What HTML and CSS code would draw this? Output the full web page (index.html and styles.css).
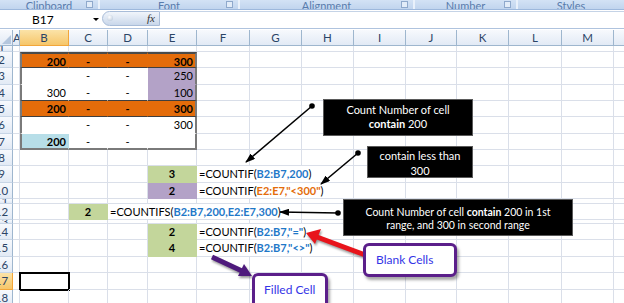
FILE: index.html
```html
<!DOCTYPE html>
<html lang="en">
<head>
  <meta charset="UTF-8">
  <title>COUNTIF examples</title>
  <link rel="stylesheet" href="styles.css">
</head>
<body>

  <!-- Ribbon group captions (cut off at the top) -->
  <div class="ribbon">
    <div class="grp g-clip"><span>Clipboard</span><i class="launch"></i></div>
    <div class="grp g-font"><span>Font</span><i class="launch"></i></div>
    <div class="grp g-align"><span>Alignment</span><i class="launch"></i></div>
    <div class="grp g-num"><span>Number</span><i class="launch"></i></div>
    <div class="grp g-styles"><span>Styles</span></div>
  </div>

  <!-- Formula bar -->
  <div class="fbar">
    <div class="namebox">B17<i class="dd"></i></div>
    <div class="fxbtn"><i class="knob"></i><em>fx</em></div>
    <div class="finput"></div>
  </div>

  <!-- Sheet -->
  <div class="sheet">
    <div class="corner"><i class="tri"></i></div><div class="ch ca">A</div><div class="ch sel">B</div><div class="ch">C</div><div class="ch">D</div><div class="ch">E</div><div class="ch">F</div><div class="ch">G</div><div class="ch">H</div><div class="ch">I</div><div class="ch">J</div><div class="ch">K</div><div class="ch">L</div><div class="ch">M</div><div class="ch"></div>

    <div class="rh thin"><span>1</span></div><div class="c"></div><div class="c"></div><div class="c"></div><div class="c"></div><div class="c"></div><div class="c"></div><div class="c"></div><div class="c"></div><div class="c"></div><div class="c"></div><div class="c"></div><div class="c"></div><div class="c"></div><div class="c"></div>

    <div class="rh"><span>2</span></div><div class="c"></div><div class="c org num ot ol">200</div><div class="c org ctr ot">-</div><div class="c org ctr ot">-</div><div class="c org num ot or">300</div><div class="c"></div><div class="c"></div><div class="c"></div><div class="c"></div><div class="c"></div><div class="c"></div><div class="c"></div><div class="c"></div><div class="c"></div>

    <div class="rh"><span>3</span></div><div class="c"></div><div class="c w ol"></div><div class="c w ctr">-</div><div class="c w ctr">-</div><div class="c pur num or">250</div><div class="c"></div><div class="c"></div><div class="c"></div><div class="c"></div><div class="c"></div><div class="c"></div><div class="c"></div><div class="c"></div><div class="c"></div>

    <div class="rh"><span>4</span></div><div class="c"></div><div class="c w num ol db">300</div><div class="c w ctr db">-</div><div class="c w ctr db">-</div><div class="c pur num or db">100</div><div class="c"></div><div class="c"></div><div class="c"></div><div class="c"></div><div class="c"></div><div class="c"></div><div class="c"></div><div class="c"></div><div class="c"></div>

    <div class="rh"><span>5</span></div><div class="c"></div><div class="c org num ol">200</div><div class="c org ctr">-</div><div class="c org ctr">-</div><div class="c org num or">300</div><div class="c"></div><div class="c"></div><div class="c"></div><div class="c"></div><div class="c"></div><div class="c"></div><div class="c"></div><div class="c"></div><div class="c"></div>

    <div class="rh"><span>6</span></div><div class="c"></div><div class="c w ol"></div><div class="c w ctr">-</div><div class="c w ctr">-</div><div class="c w num or">300</div><div class="c"></div><div class="c"></div><div class="c"></div><div class="c"></div><div class="c"></div><div class="c"></div><div class="c"></div><div class="c"></div><div class="c"></div>

    <div class="rh"><span>7</span></div><div class="c"></div><div class="c blu num ol ob">200</div><div class="c w ctr ob">-</div><div class="c w ctr ob">-</div><div class="c w or ob"></div><div class="c"></div><div class="c"></div><div class="c"></div><div class="c"></div><div class="c"></div><div class="c"></div><div class="c"></div><div class="c"></div><div class="c"></div>

    <div class="rh"><span>8</span></div><div class="c"></div><div class="c"></div><div class="c"></div><div class="c"></div><div class="c"></div><div class="c"></div><div class="c"></div><div class="c"></div><div class="c"></div><div class="c"></div><div class="c"></div><div class="c"></div><div class="c"></div><div class="c"></div>

    <div class="rh"><span>9</span></div><div class="c"></div><div class="c"></div><div class="c"></div><div class="c"></div><div class="c grn ctr">3</div><div class="c fx span3">=COUNTIF(<b class="ref">B2:B7,200</b>)</div><div class="c"></div><div class="c"></div><div class="c"></div><div class="c"></div><div class="c"></div><div class="c"></div>

    <div class="rh"><span>10</span></div><div class="c"></div><div class="c"></div><div class="c"></div><div class="c"></div><div class="c pur ctr">2</div><div class="c fx span3">=COUNTIF(<b class="ref2">E2:E7,"&lt;300"</b>)</div><div class="c"></div><div class="c"></div><div class="c"></div><div class="c"></div><div class="c"></div><div class="c"></div>

    <div class="rh thin"><span>11</span></div><div class="c"></div><div class="c"></div><div class="c"></div><div class="c"></div><div class="c"></div><div class="c"></div><div class="c"></div><div class="c"></div><div class="c"></div><div class="c"></div><div class="c"></div><div class="c"></div><div class="c"></div><div class="c"></div>

    <div class="rh"><span>12</span></div><div class="c"></div><div class="c"></div><div class="c grn ctr">2</div><div class="c fx span4">=COUNTIFS(<b class="ref">B2:B7,200,E2:E7,300</b>)</div><div class="c"></div><div class="c"></div><div class="c"></div><div class="c"></div><div class="c"></div><div class="c"></div><div class="c"></div>

    <div class="rh thin"><span>13</span></div><div class="c"></div><div class="c"></div><div class="c"></div><div class="c"></div><div class="c"></div><div class="c"></div><div class="c"></div><div class="c"></div><div class="c"></div><div class="c"></div><div class="c"></div><div class="c"></div><div class="c"></div><div class="c"></div>

    <div class="rh"><span>14</span></div><div class="c"></div><div class="c"></div><div class="c"></div><div class="c"></div><div class="c grn ctr">2</div><div class="c fx span3">=COUNTIF(<b class="ref">B2:B7,"="</b>)</div><div class="c"></div><div class="c"></div><div class="c"></div><div class="c"></div><div class="c"></div><div class="c"></div>

    <div class="rh"><span>15</span></div><div class="c"></div><div class="c"></div><div class="c"></div><div class="c"></div><div class="c grn ctr">4</div><div class="c fx span3">=COUNTIF(<b class="ref">B2:B7,"&lt;&gt;"</b>)</div><div class="c"></div><div class="c"></div><div class="c"></div><div class="c"></div><div class="c"></div><div class="c"></div>

    <div class="rh"><span>16</span></div><div class="c"></div><div class="c"></div><div class="c"></div><div class="c"></div><div class="c"></div><div class="c"></div><div class="c"></div><div class="c"></div><div class="c"></div><div class="c"></div><div class="c"></div><div class="c"></div><div class="c"></div><div class="c"></div>

    <div class="rh sel"><span>17</span></div><div class="c"></div><div class="c active"></div><div class="c"></div><div class="c"></div><div class="c"></div><div class="c"></div><div class="c"></div><div class="c"></div><div class="c"></div><div class="c"></div><div class="c"></div><div class="c"></div><div class="c"></div><div class="c"></div>

    <div class="rh"><span>18</span></div><div class="c"></div><div class="c"></div><div class="c"></div><div class="c"></div><div class="c"></div><div class="c"></div><div class="c"></div><div class="c"></div><div class="c"></div><div class="c"></div><div class="c"></div><div class="c"></div><div class="c"></div><div class="c"></div>
  </div>

  <!-- Annotation arrows -->
  <svg class="arrows" width="624" height="303" viewBox="0 0 624 303">
    <defs>
      <marker id="head" markerWidth="10" markerHeight="7" refX="9" refY="3.5" orient="auto" markerUnits="userSpaceOnUse">
        <path d="M0,0 L10,3.5 L0,7 z" fill="#000"/>
      </marker>
    </defs>
    <line x1="312" y1="106" x2="246" y2="162" stroke="#000" stroke-width="1.6" marker-end="url(#head)"/>
    <circle cx="312" cy="106" r="2.8"/>
    <line x1="358" y1="153" x2="321" y2="184" stroke="#000" stroke-width="1.6" marker-end="url(#head)"/>
    <circle cx="358" cy="153" r="2.8"/>
    <line x1="338" y1="213" x2="280" y2="212" stroke="#000" stroke-width="1.6" marker-end="url(#head)"/>
    <circle cx="338" cy="213" r="2.8"/>
    <g class="shadow">
      <line x1="368" y1="256" x2="317" y2="237" stroke="#E8141B" stroke-width="5"/>
      <polygon points="306,233 321,229 315,244" fill="#E8141B"/>
      <line x1="212" y1="257" x2="242" y2="271" stroke="#4E1A7C" stroke-width="5"/>
      <polygon points="252,276 238,276 244,264" fill="#4E1A7C"/>
    </g>
  </svg>

  <!-- Annotation boxes -->
  <div class="note note-1">Count Number of cell<br><b>contain</b> 200</div>
  <div class="note note-2">contain less than<br>300</div>
  <div class="note note-3">Count Number of cell <b>contain</b> 200 in 1st<br>range, and 300 in second range</div>
  <div class="callout blank">Blank Cells</div>
  <div class="callout filled">Filled Cell</div>

</body>
</html>
```
FILE: styles.css
```css
body {
  margin: 0;
  width: 624px;
  height: 303px;
  overflow: hidden;
  position: relative;
  background: #fff;
  font-family: Lato, "Liberation Sans", sans-serif;
  color: #000;
}

/* ribbon captions */
.ribbon {
  display: flex;
  height: 9px;
  overflow: hidden;
  background: linear-gradient(#D3E2F5, #C1D5EE);
  border-bottom: 1px solid #9DB8DC;
}

.grp {
  position: relative;
  display: flex;
  justify-content: center;
  align-items: flex-end;
  border-right: 2px solid #E9F1FB;
  font-size: 11px;
  line-height: 11px;
  color: #587BAC;
}

.grp span {
  margin-bottom: -2px;
}

.g-clip { width: 98px; }
.g-font { width: 138px; }
.g-align { width: 173px; }
.g-num { width: 101px; }
.g-styles { flex: 1; border-right: none; }

.launch {
  position: absolute;
  right: 5px;
  bottom: 1px;
  width: 5px;
  height: 5px;
  border: 1px solid #8FA9CC;
  background: #E2ECF8;
}

/* formula bar */
.fbar {
  display: flex;
  height: 18px;
  border-bottom: 1px solid #AFC3DE;
  background: #fff;
}

.namebox {
  position: relative;
  width: 102px;
  padding-left: 32px;
  box-sizing: border-box;
  font-size: 12px;
  line-height: 19px;
}

.dd {
  position: absolute;
  left: 93px;
  top: 8px;
  border-left: 3px solid transparent;
  border-right: 3px solid transparent;
  border-top: 3px solid #000;
}

.fxbtn {
  position: relative;
  width: 58px;
  height: 15px;
  margin-top: 1px;
  box-sizing: border-box;
  border: 1px solid #A8BCD8;
  border-radius: 8px 0 0 8px;
  background: linear-gradient(#F1F5FB, #C9D7EA);
}

.knob {
  position: absolute;
  left: 4px;
  top: 3px;
  width: 6px;
  height: 6px;
  border-radius: 50%;
  background: radial-gradient(circle at 40% 35%, #fff, #AFC0D6);
}

.fxbtn em {
  position: absolute;
  right: 4px;
  top: 0;
  font-family: "Liberation Serif", serif;
  font-size: 11px;
  line-height: 13px;
  color: #333;
}

.finput {
  flex: 1;
  margin-top: 1px;
  border-top: 1px solid #C5D3E6;
}

/* sheet grid */
.sheet {
  margin-top: 1px;
  display: grid;
  grid-template-columns: 13px 7px 49px 39px 40px 49px 53px 52px 52px 52px 51px 52px 53px 52px 20px;
  grid-template-rows: 16px 6px repeat(9, 16.33px) 5px 16px 4px repeat(5, 16.4px);
  font-size: 11px;
}

.corner, .ch, .rh {
  box-sizing: border-box;
  background: linear-gradient(#F7F9FD, #E2EAF5);
  border-right: 1px solid #9EB6CE;
  border-bottom: 1px solid #9EB6CE;
  color: #2B4466;
  overflow: hidden;
}

.corner {
  position: relative;
}

.tri {
  position: absolute;
  right: 1px;
  bottom: 1px;
  border-left: 9px solid transparent;
  border-bottom: 9px solid #B4C6DD;
}

.ch {
  text-align: center;
  font-size: 11.5px;
  line-height: 16px;
}

.ca {
  text-align: left;
}

.rh {
  display: flex;
  justify-content: flex-end;
  border-bottom-color: #C7D5E6;
  font-size: 11.5px;
  line-height: 16px;
}

.rh.thin {
  line-height: 4px;
}

.rh span {
  flex: none;
  width: 21px;
  text-align: center;
}

.ch.sel, .rh.sel {
  background: linear-gradient(#FBE3A8, #F6C66A);
  border-color: #F2A63A;
}

.c {
  box-sizing: border-box;
  border-right: 1px solid #DADFE9;
  border-bottom: 1px solid #DADFE9;
  white-space: nowrap;
  line-height: 16px;
  padding: 0 2px;
}

.num { text-align: right; }
.ctr { text-align: center; font-weight: bold; }

.w { background: #fff; border-color: #fff; }
.w.ctr { font-weight: normal; }

.org {
  background: #E46C0A;
  border-right-color: #E46C0A;
  border-bottom-color: #3F3F3F;
  font-weight: bold;
}

.pur { background: #B3A2C7; border-color: #B3A2C7; }
.blu { background: #B7DEE8; border-color: #B7DEE8; font-weight: bold; }
.grn { background: #C3D69B; border-color: #C3D69B; }
.db { border-bottom-color: #3F3F3F; }

/* outline of the data range */
.ol { border-left: 2px solid #7A7A7A; }
.or { border-right: 2px solid #7A7A7A; }
.ot { border-top: 2px solid #4A4A4A; }
.ob { border-bottom: 2px solid #7A7A7A; }

.fx { background: #fff; }
.span3 { grid-column: span 3; }
.span4 { grid-column: span 4; }

.ref { color: #1F78C8; }
.ref2 { color: #E46C0A; }

.active {
  outline: 2px solid #000;
  outline-offset: -1px;
}

/* annotations */
.arrows {
  position: absolute;
  left: 0;
  top: 0;
}

.shadow {
  filter: drop-shadow(1px 2px 1px rgba(0, 0, 0, 0.4));
}

.note {
  position: absolute;
  box-sizing: border-box;
  background: #000;
  border: 1px solid #5A5A5A;
  color: #fff;
  font-size: 11px;
  text-align: center;
}

.note-1 { left: 323px; top: 99px; width: 150px; height: 37px; padding-top: 3px; line-height: 14px; }
.note-2 { left: 367px; top: 146px; width: 106px; height: 32px; padding-top: 1px; line-height: 15px; }
.note-3 { left: 343px; top: 199px; width: 230px; height: 37px; padding-top: 6px; line-height: 13px; font-size: 10.5px; }

.callout {
  position: absolute;
  box-sizing: border-box;
  background: #fff;
  border: 3px solid #5B1F8A;
  border-radius: 6px;
  box-shadow: 2px 3px 3px rgba(0, 0, 0, 0.35);
  color: #3434E6;
  font-size: 12px;
}

.blank { left: 363px; top: 243px; width: 94px; height: 34px; padding: 6px 0 0 10px; }
.filled { left: 252px; top: 273px; width: 76px; height: 36px; padding: 6px 0 0 9px; }
```
